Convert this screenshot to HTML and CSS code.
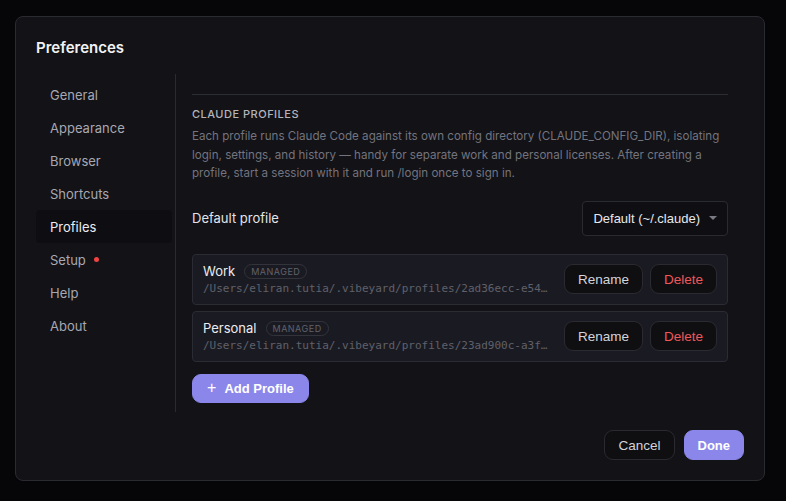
FILE: index.html
```html
<!DOCTYPE html>
<html lang="en">
<head>
    <meta charset="UTF-8">
    <meta name="viewport" content="width=device-width, initial-scale=1.0">
    <title>Preferences</title>
    <link rel="stylesheet" href="styles.css">
</head>
<body>
    <div class="dialog">
        <h1 class="dialog-title">Preferences</h1>

        <div class="dialog-body">
            <nav class="sidebar">
                <a href="#" class="nav-item">General</a>
                <a href="#" class="nav-item">Appearance</a>
                <a href="#" class="nav-item">Browser</a>
                <a href="#" class="nav-item">Shortcuts</a>
                <a href="#" class="nav-item active">Profiles</a>
                <a href="#" class="nav-item">Setup <span class="dot"></span></a>
                <a href="#" class="nav-item">Help</a>
                <a href="#" class="nav-item">About</a>
            </nav>

            <section class="content">
                <h2 class="section-title">Claude Profiles</h2>
                <p class="section-desc">Each profile runs Claude Code against its own config directory (CLAUDE_CONFIG_DIR), isolating login, settings, and history — handy for separate work and personal licenses. After creating a profile, start a session with it and run /login once to sign in.</p>

                <div class="setting-row">
                    <span class="setting-label">Default profile</span>
                    <div class="select">
                        Default (~/.claude)
                        <span class="caret"></span>
                    </div>
                </div>

                <div class="profile-card">
                    <div class="profile-info">
                        <div class="profile-name">Work <span class="badge">MANAGED</span></div>
                        <div class="profile-path">/Users/eliran.tutia/.vibeyard/profiles/2ad36ecc-e54b-4f1e-9c2a-7d0e61b3a8f2</div>
                    </div>
                    <button class="btn">Rename</button>
                    <button class="btn danger">Delete</button>
                </div>

                <div class="profile-card">
                    <div class="profile-info">
                        <div class="profile-name">Personal <span class="badge">MANAGED</span></div>
                        <div class="profile-path">/Users/eliran.tutia/.vibeyard/profiles/23ad900c-a3f4-41b7-8e5d-0c9a2f17e6b4</div>
                    </div>
                    <button class="btn">Rename</button>
                    <button class="btn danger">Delete</button>
                </div>

                <button class="btn primary add-btn"><span class="plus">+</span> Add Profile</button>
            </section>
        </div>

        <div class="dialog-footer">
            <button class="btn">Cancel</button>
            <button class="btn primary">Done</button>
        </div>
    </div>
</body>
</html>
```

FILE: styles.css
```css
body {
    margin: 0;
    padding: 16px 21px 20px 15px;
    background-color: #060608;
    font-family: Inter, "Noto Sans", sans-serif;
    color: #e6e6ea;
}
.dialog {
    box-sizing: border-box;
    width: 750px;
    height: 465px;
    background-color: #121217;
    border: 1px solid #2a2a31;
    border-radius: 8px;
    padding: 21px 20px 0 20px;
    display: flex;
    flex-direction: column;
}
.dialog-title {
    margin: 0;
    font-size: 15px;
    font-weight: 600;
    color: #f2f2f4;
    line-height: 20px;
}
.dialog-body {
    display: flex;
    margin-top: 16px;
    height: 338px;
}
.sidebar {
    flex: 0 0 140px;
    box-sizing: border-box;
    border-right: 1px solid #2a2a31;
    display: flex;
    flex-direction: column;
    padding-top: 4px;
}
.nav-item {
    display: flex;
    align-items: center;
    gap: 8px;
    height: 33px;
    padding-left: 14px;
    margin-right: 3px;
    font-size: 13px;
    color: #a8a8b2;
    text-decoration: none;
    border-radius: 4px;
}
.nav-item.active {
    background-color: #0e0e12;
    color: #ececf0;
}
.dot {
    width: 5px;
    height: 5px;
    border-radius: 50%;
    background-color: #ef4444;
}
.content {
    flex: 1;
    min-width: 0;
    padding: 20px 16px 0 16px;
}
.section-title {
    margin: 0;
    padding-top: 13px;
    border-top: 1px solid #2c2c33;
    font-size: 11px;
    font-weight: 500;
    letter-spacing: 0.5px;
    text-transform: uppercase;
    color: #b4b4bc;
    line-height: 12px;
}
.section-desc {
    margin: 7px 0 0 0;
    font-size: 11.6px;
    line-height: 18.5px;
    color: #74747e;
}
.setting-row {
    display: flex;
    justify-content: space-between;
    align-items: center;
    margin-top: 18px;
    margin-bottom: 18px;
}
.setting-label {
    font-size: 13px;
    color: #e4e4e8;
}
.select {
    box-sizing: border-box;
    height: 35px;
    padding: 0 10px;
    display: flex;
    align-items: center;
    gap: 9px;
    border: 1px solid #2a2a31;
    border-radius: 4px;
    background-color: #0f0f13;
    font-family: "Liberation Sans", Arial, sans-serif;
    font-size: 13px;
    color: #e8e8ec;
}
.caret {
    width: 0;
    height: 0;
    border-left: 4px solid transparent;
    border-right: 4px solid transparent;
    border-top: 4px solid #7a7a84;
}
.profile-card {
    box-sizing: border-box;
    display: flex;
    align-items: center;
    gap: 7px;
    height: 51px;
    padding: 0 10px;
    margin-bottom: 6px;
    background-color: #1a1b22;
    border: 1px solid #2a2b33;
    border-radius: 4px;
}
.profile-info {
    flex: 1;
    min-width: 0;
    margin-right: 4px;
}
.profile-name {
    display: flex;
    align-items: center;
    gap: 9px;
    font-size: 13px;
    color: #ececf0;
}
.badge {
    font-size: 9px;
    letter-spacing: 0.5px;
    color: #62626c;
    border: 1px solid #33333b;
    border-radius: 8px;
    padding: 1px 6px;
    line-height: 11px;
}
.profile-path {
    margin-top: 3px;
    font-family: "DejaVu Sans Mono", monospace;
    font-size: 11px;
    color: #60606a;
    white-space: nowrap;
    overflow: hidden;
    text-overflow: ellipsis;
}
.btn {
    box-sizing: border-box;
    height: 30px;
    padding: 0 13px;
    font-family: "Liberation Sans", Arial, sans-serif;
    font-size: 13.5px;
    color: #d4d4da;
    background-color: #0f0f12;
    border: 1px solid #2a2a30;
    border-radius: 9px;
    cursor: pointer;
}
.btn.danger {
    color: #f0585a;
}
.btn.primary {
    background-color: #8b87ea;
    border-color: #8b87ea;
    color: #fff;
    font-weight: bold;
    font-size: 13px;
}
.add-btn {
    margin-top: 6px;
    height: 29px;
    padding: 0 14px;
}
.plus {
    font-weight: normal;
    font-size: 16px;
    margin-right: 5px;
}
.dialog-footer {
    display: flex;
    justify-content: flex-end;
    gap: 9px;
    margin-top: 18px;
}
```
